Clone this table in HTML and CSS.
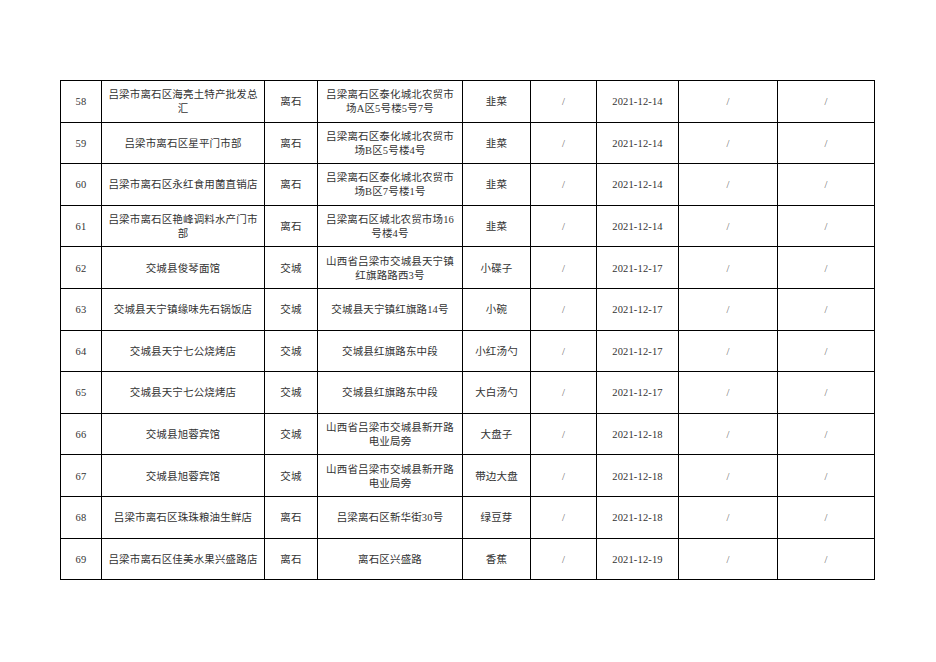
FILE: index.html
```html
<!DOCTYPE html>
<html lang="zh-CN">
<head>
<meta charset="utf-8">
<title>表格</title>
<link rel="stylesheet" href="styles.css">
</head>
<body>
<table class="grid">
<colgroup>
<col class="c1"><col class="c2"><col class="c3"><col class="c4"><col class="c5"><col class="c6"><col class="c7"><col class="c8"><col class="c9">
</colgroup>
<tbody>
<tr><td>58</td><td>吕梁市离石区海亮土特产批发总<br>汇</td><td>离石</td><td>吕梁离石区泰化城北农贸市<br>场A区5号楼5号7号</td><td>韭菜</td><td class="sl">/</td><td>2021-12-14</td><td class="sl">/</td><td class="sl">/</td></tr>
<tr><td>59</td><td>吕梁市离石区星平门市部</td><td>离石</td><td>吕梁离石区泰化城北农贸市<br>场B区5号楼4号</td><td>韭菜</td><td class="sl">/</td><td>2021-12-14</td><td class="sl">/</td><td class="sl">/</td></tr>
<tr><td>60</td><td>吕梁市离石区永红食用菌直销店</td><td>离石</td><td>吕梁离石区泰化城北农贸市<br>场B区7号楼1号</td><td>韭菜</td><td class="sl">/</td><td>2021-12-14</td><td class="sl">/</td><td class="sl">/</td></tr>
<tr><td>61</td><td>吕梁市离石区艳峰调料水产门市<br>部</td><td>离石</td><td>吕梁离石区城北农贸市场16<br>号楼4号</td><td>韭菜</td><td class="sl">/</td><td>2021-12-14</td><td class="sl">/</td><td class="sl">/</td></tr>
<tr><td>62</td><td>交城县俊琴面馆</td><td>交城</td><td>山西省吕梁市交城县天宁镇<br>红旗路路西3号</td><td>小碟子</td><td class="sl">/</td><td>2021-12-17</td><td class="sl">/</td><td class="sl">/</td></tr>
<tr><td>63</td><td>交城县天宁镇缘味先石锅饭店</td><td>交城</td><td>交城县天宁镇红旗路14号</td><td>小碗</td><td class="sl">/</td><td>2021-12-17</td><td class="sl">/</td><td class="sl">/</td></tr>
<tr><td>64</td><td>交城县天宁七公烧烤店</td><td>交城</td><td>交城县红旗路东中段</td><td>小红汤勺</td><td class="sl">/</td><td>2021-12-17</td><td class="sl">/</td><td class="sl">/</td></tr>
<tr><td>65</td><td>交城县天宁七公烧烤店</td><td>交城</td><td>交城县红旗路东中段</td><td>大白汤勺</td><td class="sl">/</td><td>2021-12-17</td><td class="sl">/</td><td class="sl">/</td></tr>
<tr><td>66</td><td>交城县旭蓉宾馆</td><td>交城</td><td>山西省吕梁市交城县新开路<br>电业局旁</td><td>大盘子</td><td class="sl">/</td><td>2021-12-18</td><td class="sl">/</td><td class="sl">/</td></tr>
<tr><td>67</td><td>交城县旭蓉宾馆</td><td>交城</td><td>山西省吕梁市交城县新开路<br>电业局旁</td><td>带边大盘</td><td class="sl">/</td><td>2021-12-18</td><td class="sl">/</td><td class="sl">/</td></tr>
<tr><td>68</td><td>吕梁市离石区珠珠粮油生鲜店</td><td>离石</td><td>吕梁离石区新华街30号</td><td>绿豆芽</td><td class="sl">/</td><td>2021-12-18</td><td class="sl">/</td><td class="sl">/</td></tr>
<tr><td>69</td><td>吕梁市离石区佳美水果兴盛路店</td><td>离石</td><td>离石区兴盛路</td><td>香蕉</td><td class="sl">/</td><td>2021-12-19</td><td class="sl">/</td><td class="sl">/</td></tr>
</tbody>
</table>
</body>
</html>
```

FILE: styles.css
```css
html, body {
  margin: 0;
  padding: 0;
  background: #ffffff;
}
body {
  padding: 80px 0 0 60px;
  font-family: "Liberation Serif", "Noto Sans CJK SC", serif;
  color: #333333;
}
.grid {
  border-collapse: collapse;
  table-layout: fixed;
  width: 814px;
  font-size: 10.5px;
  line-height: 14px;
  letter-spacing: 0.15px;
}
.c1 { width: 41px; }
.c2 { width: 163px; }
.c3 { width: 53px; }
.c4 { width: 145px; }
.c5 { width: 68px; }
.c6 { width: 66px; }
.c7 { width: 82px; }
.c8 { width: 99px; }
.c9 { width: 97px; }
.grid td {
  border: 1px solid #000000;
  height: 38.6px;
  padding: 2px 0 0 0;
  text-align: center;
  vertical-align: middle;
  white-space: nowrap;
  overflow: hidden;
}
.grid td.sl {
  color: #666666;
}
```
